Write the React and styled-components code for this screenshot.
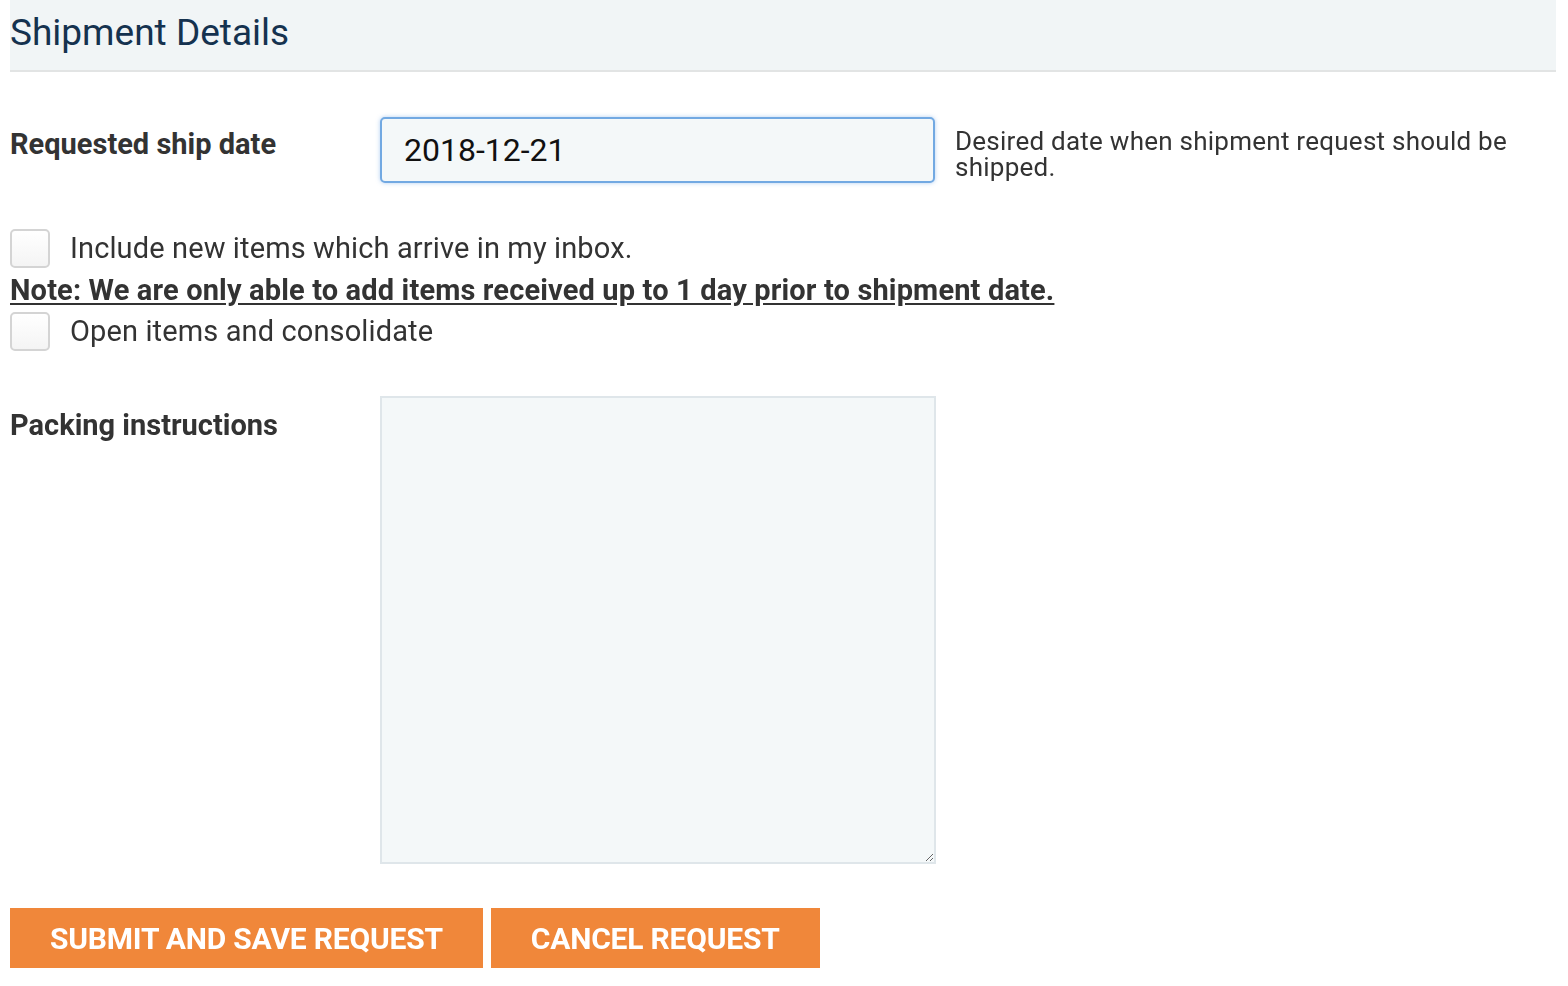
import React from 'react';
import styled, { createGlobalStyle } from 'styled-components';

const GlobalStyle = createGlobalStyle`
  body {
    margin: 0;
    background: #fff;
    font-family: Roboto, "Liberation Sans", sans-serif;
    color: #333;
  }
`;

const Page = styled.div`
  padding: 0 12px 0 10px;
`;

const Header = styled.div`
  background: #f1f5f6;
  border-bottom: 2px solid #e2e4e4;
  height: 70px;
  display: flex;
  align-items: center;
`;

const Title = styled.h2`
  margin: 0;
  font-weight: 400;
  font-size: 37px;
  color: #15324f;
  line-height: 1;
  margin-top: -6px;
`;

const FieldRow = styled.div`
  display: grid;
  grid-template-columns: 370px 555px 1fr;
  align-items: start;
  margin-top: ${p => p.$top}px;
`;

const Label = styled.label`
  font-weight: 700;
  font-size: 29px;
  line-height: 34px;
  color: #333;
  padding-top: ${p => p.$pad || 0}px;
`;

const DateInput = styled.input`
  box-sizing: border-box;
  width: 555px;
  height: 66px;
  border: 2px solid #72a9e2;
  border-radius: 5px;
  background: #f4f8f9;
  box-shadow: 0 0 4px rgba(102, 160, 230, 0.5);
  padding: 0 22px;
  font-family: Roboto, "Liberation Sans", sans-serif;
  font-size: 32px;
  color: #111;
  outline: none;
  caret-color: #111;
`;

const Help = styled.div`
  padding-left: 20px;
  font-size: 26px;
  letter-spacing: 0.25px;
  line-height: 26px;
  color: #333;
  padding-top: 11px;
`;

const Checks = styled.div`
  margin-top: 45px;
`;

const CheckRow = styled.label`
  display: flex;
  align-items: center;
  gap: 20px;
  height: 40px;
  font-size: 29px;
  letter-spacing: 0.12px;
  color: #333;
`;

const Box = styled.span`
  box-sizing: border-box;
  width: 40px;
  height: 39px;
  border: 2px solid #d4d4d4;
  border-radius: 5px;
  background: linear-gradient(#fff, #f4f4f4);
`;

const Note = styled.div`
  font-weight: 700;
  font-size: 29px;
  letter-spacing: 0.15px;
  text-decoration: underline;
  text-underline-offset: 3px;
  color: #333;
  margin: 4px 0 3px;
  line-height: 36px;
`;

const TextArea = styled.textarea`
  box-sizing: border-box;
  width: 556px;
  height: 468px;
  border: 2px solid #dfe6ea;
  background: #f4f8f9;
  resize: vertical;
  outline: none;
`;

const Buttons = styled.div`
  display: flex;
  gap: 8px;
  margin-top: 44px;
`;

const Button = styled.button`
  height: 60px;
  padding: 0 40px;
  border: none;
  background: #f0873a;
  color: #fff;
  font-family: Roboto, "Liberation Sans", sans-serif;
  font-weight: 700;
  font-size: 30px;
  text-transform: uppercase;
  letter-spacing: -0.2px;
  cursor: pointer;
`;

export default function App() {
  return (
    <Page>
      <GlobalStyle />
      <Header>
        <Title>Shipment Details</Title>
      </Header>
      <FieldRow $top={45}>
        <Label $pad={10}>Requested ship date</Label>
        <DateInput defaultValue="2018-12-21" autoFocus />
        <Help>Desired date when shipment request should be shipped.</Help>
      </FieldRow>
      <Checks>
        <CheckRow><Box />Include new items which arrive in my inbox.</CheckRow>
        <Note>Note: We are only able to add items received up to 1 day prior to shipment date.</Note>
        <CheckRow><Box />Open items and consolidate</CheckRow>
      </Checks>
      <FieldRow $top={45}>
        <Label $pad={12}>Packing instructions</Label>
        <TextArea />
      </FieldRow>
      <Buttons>
        <Button>Submit and save request</Button>
        <Button>Cancel request</Button>
      </Buttons>
    </Page>
  );
}
